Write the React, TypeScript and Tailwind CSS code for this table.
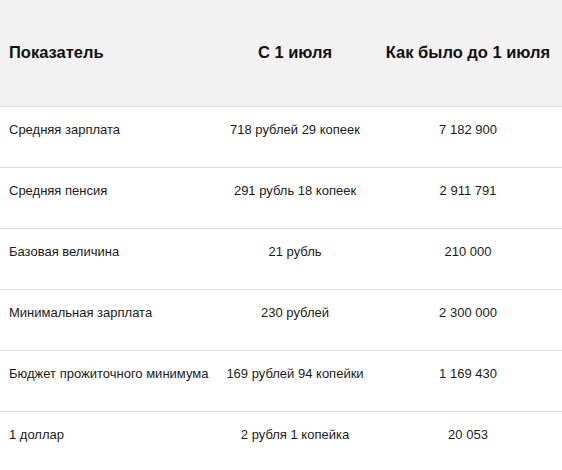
const rows = [
  ["Средняя зарплата", "718 рублей 29 копеек", "7 182 900"],
  ["Средняя пенсия", "291 рубль 18 копеек", "2 911 791"],
  ["Базовая величина", "21 рубль", "210 000"],
  ["Минимальная зарплата", "230 рублей", "2 300 000"],
  ["Бюджет прожиточного минимума", "169 рублей 94 копейки", "1 169 430"],
  ["1 доллар", "2 рубля 1 копейка", "20 053"],
];

export default function App() {
  return (
    <div className="w-[562px] h-[470px] overflow-hidden bg-white font-['Liberation_Sans',Arial,sans-serif] text-[#1a1a1a]">
      <table className="w-full border-collapse table-fixed">
        <colgroup>
          <col className="w-[216px]" />
          <col className="w-[158px]" />
          <col />
        </colgroup>
        <thead>
          <tr className="bg-[#f2f2f2] h-[106px] border-b border-[#dcdcdc]">
            <th className="text-left pl-[9px] text-[16.5px] font-bold text-[#111]">Показатель</th>
            <th className="text-center text-[16.5px] font-bold text-[#111]">С 1 июля</th>
            <th className="text-center text-[16.5px] font-bold text-[#111] whitespace-nowrap">Как было до 1 июля</th>
          </tr>
        </thead>
        <tbody>
          {rows.map((r) => (
            <tr key={r[0]} className="border-b border-[#dcdcdc] text-[13px] leading-[16px]">
              <td className="pl-[9px] pt-[15px] pb-[29px] whitespace-nowrap">{r[0]}</td>
              <td className="text-center pt-[15px] pb-[29px] whitespace-nowrap">{r[1]}</td>
              <td className="text-center pt-[15px] pb-[29px]">{r[2]}</td>
            </tr>
          ))}
        </tbody>
      </table>
    </div>
  );
}
